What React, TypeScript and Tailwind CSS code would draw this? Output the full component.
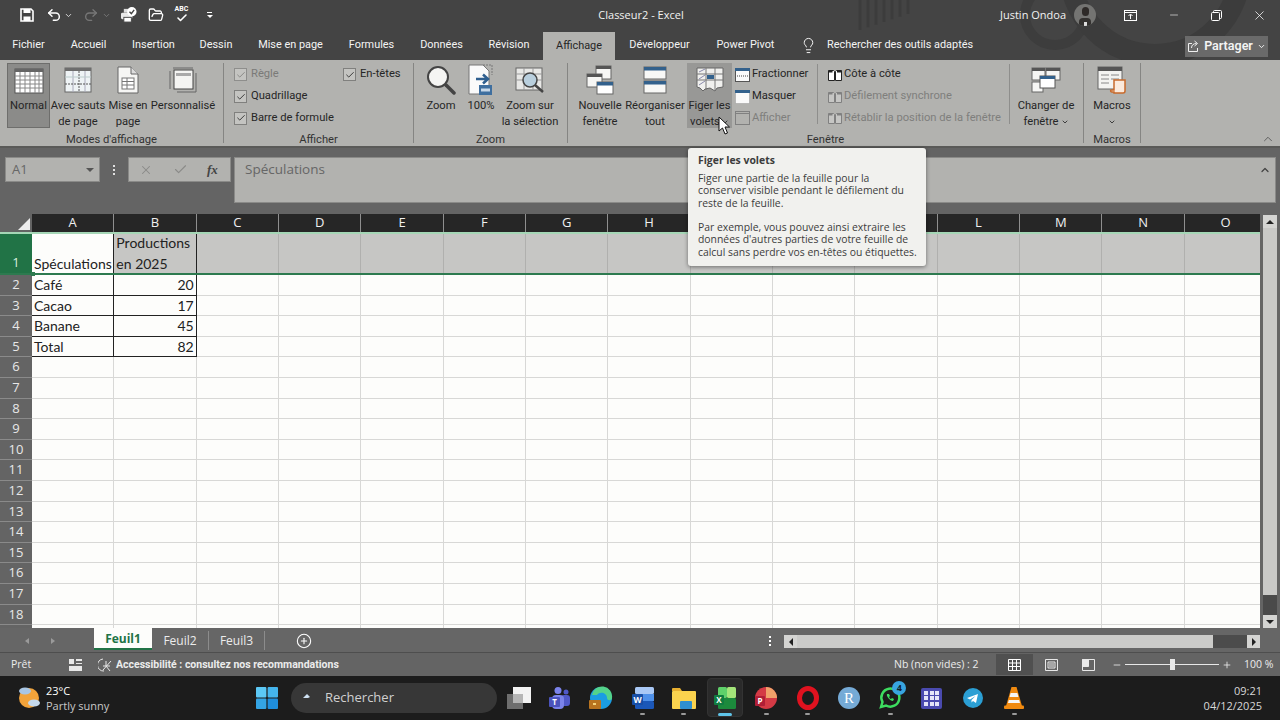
import React from "react";
import {
  Undo2,
  Redo2,
  ChevronDown,
  ChevronUp,
  Check,
  FolderOpen,
  Lightbulb,
  Minus,
  X,
  Plus,
  CirclePlus,
} from "lucide-react";

const UI = "font-['Open_Sans','Noto_Sans',sans-serif]";
const NARROW = "font-['Roboto','Open_Sans',sans-serif]";
const COLS = ["A", "B", "C", "D", "E", "F", "G", "H", "I", "J", "K", "L", "M", "N", "O"];
const ROWS = [2, 3, 4, 5, 6, 7, 8, 9, 10, 11, 12, 13, 14, 15, 16, 17, 18, 19];
const DATA: Record<number, [string, string]> = {
  2: ["Café", "20"],
  3: ["Cacao", "17"],
  4: ["Banane", "45"],
  5: ["Total", "82"],
};
const LEFT_TABS = [
  ["Fichier", "w-[57px]"],
  ["Accueil", "w-[63px]"],
  ["Insertion", "w-[67px]"],
  ["Dessin", "w-[58px]"],
  ["Mise en page", "w-[91px]"],
  ["Formules", "w-[71px]"],
  ["Données", "w-[69px]"],
  ["Révision", "w-[66px]"],
];
const RIGHT_TABS = [
  ["Développeur", "w-[89px]"],
  ["Power Pivot", "w-[83px]"],
];

/* ---------- ribbon icons ---------- */

function GridIcon() {
  return (
    <svg width="30" height="26" viewBox="0 0 30 26">
      <rect x="1" y="1" width="28" height="24" fill="#fff" stroke="#555" />
      <rect x="1" y="1" width="28" height="3" fill="#666" />
      {[8, 12, 16, 20].map((y) => (
        <line key={y} x1="1" x2="29" y1={y} y2={y} stroke="#888" />
      ))}
      {[6, 11, 16, 21, 25].map((x) => (
        <line key={x} x1={x} x2={x} y1="4" y2="25" stroke="#888" />
      ))}
    </svg>
  );
}

function PageBreakIcon() {
  return (
    <svg width="28" height="26" viewBox="0 0 28 26">
      <rect x="1" y="1" width="26" height="24" fill="#eef3f5" stroke="#666" />
      <rect x="1" y="1" width="26" height="3" fill="#6d6d6d" />
      <line x1="9" x2="9" y1="4" y2="25" stroke="#aab" />
      <line x1="15" x2="15" y1="4" y2="25" stroke="#555" strokeDasharray="2 1" />
      <line x1="21" x2="21" y1="4" y2="25" stroke="#aab" />
      <line x1="1" x2="27" y1="10" y2="10" stroke="#bcc" />
      <line x1="1" x2="27" y1="17" y2="17" stroke="#555" strokeDasharray="2 1" />
    </svg>
  );
}

function PageIcon() {
  return (
    <svg width="22" height="28" viewBox="0 0 22 28">
      <path d="M1 1h13l7 7v19H1z" fill="#f6f6f4" stroke="#666" />
      <path d="M14 1v7h7" fill="#ddd" stroke="#666" />
      <rect x="5" y="12" width="12" height="11" fill="#fff" stroke="#777" />
      <path d="M5 15.5h12M5 19h12M10 12v11" stroke="#777" />
    </svg>
  );
}

function CustomViewIcon() {
  return (
    <svg width="28" height="26" viewBox="0 0 28 26">
      <path d="M1 4v18M4 1h20M27 6v19H8" fill="none" stroke="#666" strokeWidth="1" />
      <rect x="5" y="3" width="19" height="19" fill="#f4f4f2" stroke="#444" />
      <rect x="7" y="6" width="15" height="3" fill="#a9a9a9" />
    </svg>
  );
}

function Magnifier() {
  return (
    <svg width="30" height="30" viewBox="0 0 30 30">
      <circle cx="12" cy="12" r="10" fill="#f5f5f3" stroke="#444" strokeWidth="2" />
      <line x1="20" y1="20" x2="28" y2="28" stroke="#444" strokeWidth="3.5" strokeLinecap="round" />
    </svg>
  );
}

function HundredIcon() {
  return (
    <svg width="26" height="32" viewBox="0 0 26 32">
      <path d="M1 1h14l6 6v23H1z" fill="#fafafa" stroke="#777" />
      <path d="M15 1h9v10" fill="none" stroke="#777" strokeDasharray="2 1" />
      <path d="M8 15h11M15 10.5l5 4.5-5 4.5" fill="none" stroke="#2f5f8f" strokeWidth="2.5" />
      <rect x="11" y="21" width="13" height="10" fill="#3f6f9f" />
      <rect x="13" y="24.5" width="9" height="3" fill="#c8d8e8" />
    </svg>
  );
}

function ZoomSelectionIcon() {
  return (
    <svg width="30" height="30" viewBox="0 0 30 30">
      <rect x="1" y="3" width="26" height="22" fill="#e8e8e6" stroke="#666" />
      <path d="M1 9h26M1 15h26M9 3v22M18 3v22" stroke="#999" />
      <circle cx="15" cy="15" r="7" fill="#b9cfdd" stroke="#444" strokeWidth="1.5" />
      <line x1="20" y1="20" x2="28" y2="27" stroke="#444" strokeWidth="2.5" />
    </svg>
  );
}

function NewWindowIcon() {
  return (
    <svg width="28" height="30" viewBox="0 0 28 30">
      <rect x="10" y="1" width="15" height="13" fill="#f6f6f4" stroke="#666" />
      <rect x="10" y="1" width="15" height="3" fill="#555" />
      <rect x="1" y="9" width="15" height="13" fill="#f6f6f4" stroke="#666" />
      <rect x="1" y="9" width="15" height="3" fill="#555" />
      <rect x="11" y="17" width="16" height="12" fill="#fff" stroke="#666" />
      <rect x="11" y="17" width="16" height="3.5" fill="#33618c" />
    </svg>
  );
}

function ArrangeIcon() {
  return (
    <svg width="24" height="28" viewBox="0 0 24 28">
      <rect x="1" y="1" width="22" height="12" fill="#f8f8f6" stroke="#666" />
      <rect x="1" y="1" width="22" height="3.5" fill="#33618c" />
      <rect x="1" y="15" width="22" height="12" fill="#f8f8f6" stroke="#666" />
      <rect x="1" y="15" width="22" height="3.5" fill="#33618c" />
    </svg>
  );
}

function FreezeIcon() {
  return (
    <svg width="28" height="26" viewBox="0 0 28 26">
      <path d="M1 1h26v19l-6 1-2 3-5-3-5 1-2 2-3-3-3-1z" fill="#f0f0ee" stroke="#666" />
      <path d="M1 7h26M1 13h26M10 1v22M19 1v22" stroke="#777" />
      <path d="M3 5l6-3M3 12l6-4M3 18l6-4" stroke="#88a" />
      <rect x="11" y="8" width="7" height="4" fill="#33618c" />
    </svg>
  );
}

function SmallWindow({ kind }: { kind: "split" | "hide" | "show" }) {
  if (kind === "show") {
    return (
      <svg width="15" height="14" viewBox="0 0 15 14">
        <rect x="0.5" y="0.5" width="14" height="13" fill="none" stroke="#808080" />
        <line x1="0.5" x2="14.5" y1="2.5" y2="2.5" stroke="#808080" />
      </svg>
    );
  }
  return (
    <svg width="15" height="14" viewBox="0 0 15 14">
      <rect
        x="0.5"
        y="0.5"
        width="14"
        height="13"
        fill="#fafafa"
        stroke={kind === "split" ? "#555" : "#999"}
        strokeDasharray={kind === "hide" ? "1 1" : undefined}
      />
      <rect x="0" y="0" width="15" height="3" fill="#33618c" />
      {kind === "split" && <line x1="2" x2="13" y1="8" y2="8" stroke="#444" strokeDasharray="1 1" />}
    </svg>
  );
}

function SideBySide({ dim }: { dim?: boolean }) {
  const c = dim ? "#808080" : "#222";
  return (
    <svg width="14" height="12" viewBox="0 0 14 12">
      <path d="M0.5 1.5h5l1 1v9h-6zM7.5 2.5l1-1h5v10h-6z" fill={dim ? "#c6c6c4" : "#fff"} stroke={c} />
      <path d="M0.5 1.5h4v2h-4zM9 1.5h4.5v2H9z" fill={c} />
    </svg>
  );
}

function SwitchWindowIcon() {
  return (
    <svg width="30" height="26" viewBox="0 0 30 26">
      <rect x="1" y="1" width="13" height="12" fill="#f6f6f4" stroke="#666" />
      <rect x="1" y="1" width="13" height="3" fill="#555" />
      <rect x="15" y="1" width="14" height="12" fill="#f6f6f4" stroke="#666" />
      <rect x="15" y="1" width="14" height="3" fill="#555" />
      <rect x="1" y="15" width="11" height="10" fill="#f6f6f4" stroke="#666" />
      <rect x="9" y="9" width="15" height="12" fill="#fff" stroke="#555" />
      <rect x="9" y="9" width="15" height="3" fill="#33618c" />
    </svg>
  );
}

function MacroIcon() {
  return (
    <svg width="30" height="28" viewBox="0 0 30 28">
      <rect x="1" y="1" width="24" height="22" fill="#f3f3f1" stroke="#666" />
      <rect x="1" y="1" width="24" height="4" fill="#555" />
      <path d="M4 9h8M14 9h8M4 13h8M14 13h8M4 17h8" stroke="#888" />
      <path d="M17 14h11v11c0 1.5-1 2-2 2H17v-1h-2c-1 0-2-1-1-2h3z" fill="#fbeadd" stroke="#c86a2b" strokeWidth="1.5" />
    </svg>
  );
}

function Tick({ dim }: { dim?: boolean }) {
  return (
    <span
      className={`flex h-[13px] w-[13px] items-center justify-center border ${
        dim ? "border-[#8e8e8c] text-[#7d7d7b]" : "border-[#80807e] text-[#222]"
      } bg-[#c4c4c1]`}
    >
      <Check size={10} strokeWidth={2} />
    </span>
  );
}

/* ---------- ribbon pieces ---------- */

function RibbonBtn({
  w,
  icon,
  lines,
  state,
}: {
  w: string;
  icon: React.ReactNode;
  lines: React.ReactNode[];
  state?: "on" | "hover";
}) {
  const bg =
    state === "on"
      ? "bg-[#8b8b89] border border-[#6e6e6c]"
      : state === "hover"
      ? "bg-[#989896]"
      : "";
  return (
    <div className={`${w} ${bg} flex h-[65px] shrink-0 flex-col items-center`}>
      <div className={`${state === "on" ? "h-[35px]" : "h-[36px]"} flex w-full shrink-0 items-center justify-center pb-[2px]`}>{icon}</div>
      {lines.map((l, i) => (
        <div key={i} className="flex h-[15.5px] shrink-0 items-center whitespace-nowrap text-[11.2px] text-[#262626]">
          {l}
        </div>
      ))}
    </div>
  );
}

function CheckRow({ label, dim }: { label: string; dim?: boolean }) {
  return (
    <div className="flex h-[21.7px] items-center gap-[4px]">
      <Tick dim={dim} />
      <span className={`whitespace-nowrap text-[11.2px] ${dim ? "text-[#7a7a78]" : "text-[#262626]"}`}>{label}</span>
    </div>
  );
}

function SmallRow({ icon, label, dim }: { icon: React.ReactNode; label: string; dim?: boolean }) {
  return (
    <div className="flex h-[21.7px] items-center gap-[2px]">
      <span className="flex w-[15px] items-center justify-center">{icon}</span>
      <span className={`whitespace-nowrap text-[11.2px] ${dim ? "text-[#7f7f7d]" : "text-[#262626]"}`}>{label}</span>
    </div>
  );
}

function Group({ w, label, children }: { w: string; label: string; children: React.ReactNode }) {
  return (
    <div className={`${w} flex h-[80px] shrink-0 flex-col border-r border-[#858583]`}>
      <div className="flex h-[65px] shrink-0 items-start">{children}</div>
      <div className="mt-[5px] shrink-0 text-center text-[11.2px] leading-[14px] text-[#333]">{label}</div>
    </div>
  );
}

/* ---------- taskbar icons ---------- */

function TaskIcon({ children, dot, active }: { children: React.ReactNode; dot?: boolean; active?: boolean }) {
  return (
    <div className="relative flex h-[44px] w-[41.3px] items-center justify-center">
      {active && <div className="absolute inset-x-[3px] top-[2px] bottom-[3px] rounded-[4px] border border-[#333] bg-[#2a2a2a]" />}
      <div className="relative flex items-center justify-center">{children}</div>
      {dot && <div className="absolute bottom-[5px] left-[18px] h-[2px] w-[5px] rounded bg-[#9a9a9a]" />}
      {active && <div className="absolute bottom-[4px] left-[14px] h-[3px] w-[14px] rounded bg-[#5fc3e8]" />}
    </div>
  );
}

export default function App() {
  return (
    <div className={`${NARROW} relative flex h-[720px] w-[1280px] flex-col overflow-hidden bg-[#646464]`}>
      {/* title bar + tabs share the dark backdrop */}
      <div className="relative h-[60px] shrink-0 bg-[#444444]">
        <svg className="absolute left-[850px] top-0" width="430" height="60" viewBox="0 0 430 60" fill="none">
          {[0, 8, 16, 24, 32, 40, 48].map((x) => (
            <line key={x} x1={x + 10} x2={x + 10} y1="0" y2={30 - x / 3} stroke="#3c3c3c" strokeWidth="3" />
          ))}
          <circle cx="205" cy="15" r="30" stroke="#3d3d3d" strokeWidth="10" />
          <circle cx="305" cy="-30" r="85" stroke="#3c3c3c" strokeWidth="22" />
        </svg>

        {/* quick access + title */}
        <div className="relative flex h-[30px] items-center text-white">
          <div className="ml-[20px] flex h-[30px] w-[14px] items-center">
            <svg width="14" height="14" viewBox="0 0 14 14">
              <path d="M1 1h10l2 2v10H1z" fill="none" stroke="#fff" strokeWidth="1.6" />
              <rect x="3.5" y="1" width="7" height="4" fill="#fff" />
              <rect x="3.5" y="8.5" width="7" height="4.5" fill="#fff" />
            </svg>
          </div>
          <Undo2 size={16} strokeWidth={2.2} className="ml-[12px]" />
          <ChevronDown size={9} strokeWidth={2.5} className="ml-[2px] text-[#ddd]" />
          <Redo2 size={16} strokeWidth={2} className="ml-[10px] text-[#777]" />
          <ChevronDown size={9} strokeWidth={2.5} className="ml-[3px] text-[#777]" />
          <svg className="ml-[10px]" width="16" height="16" viewBox="0 0 17 17">
            <rect x="0" y="6" width="12" height="7" rx="1.5" fill="#e8e8e8" />
            <rect x="3" y="11" width="8" height="5" fill="#fff" stroke="#444" />
            <rect x="3" y="2" width="6" height="4" fill="#ddd" />
            <circle cx="11.5" cy="5" r="5" fill="#fff" />
            <path d="M9 5l2 2 3-4" fill="none" stroke="#444" strokeWidth="1.5" />
          </svg>
          <FolderOpen size={16} strokeWidth={2} className="ml-[11px]" />
          <div className="ml-[10px] flex w-[15px] flex-col items-center">
            <span className="text-[7px] font-bold leading-[7px]">ABC</span>
            <Check size={12} strokeWidth={3.2} className="-mt-[1px]" />
          </div>
          <div className="ml-[17px] flex w-[7px] flex-col items-center gap-[2px]">
            <div className="h-px w-[5px] bg-white" />
            <div className="h-0 w-0 border-x-[3px] border-t-[3px] border-x-transparent border-t-white" />
          </div>

          <div className={`${UI} ml-[384px] w-[88px] whitespace-nowrap text-center text-[11px] text-[#f2f2f2]`}>Classeur2 - Excel</div>

          <div className={`${UI} ml-[315px] w-[68px] whitespace-nowrap text-[11px] text-[#f2f2f2]`}>Justin Ondoa</div>
          <div className="relative ml-[6px] flex h-[22px] w-[22px] justify-center overflow-hidden rounded-full bg-[#747472]">
            <div className="mt-[3px] h-[9px] w-[7px] rounded-full bg-[#2e2a28]" />
            <div className="absolute bottom-0 h-[8px] w-[12px] rounded-t bg-[#33312f]" />
            <div className="absolute bottom-0 h-[4px] w-[3px] bg-[#ddd]" />
          </div>
          <svg className="ml-[28px]" width="13" height="11" viewBox="0 0 13 11" fill="none" stroke="#fff">
            <rect x="0.5" y="0.5" width="12" height="10" />
            <path d="M0.5 2.5h12M6.5 9V4.5M4.5 6l2-2 2 2" />
          </svg>
          <Minus size={12} strokeWidth={1.2} className="ml-[31px]" />
          <svg className="ml-[31px]" width="11" height="11" viewBox="0 0 11 11" fill="none" stroke="#fff">
            <rect x="0.5" y="2.5" width="8" height="8" rx="1" />
            <path d="M2.5 2.5v-1a1 1 0 0 1 1-1h6a1 1 0 0 1 1 1v6a1 1 0 0 1-1 1h-1" />
          </svg>
          <X size={15} strokeWidth={1.2} className="ml-[30px]" />
        </div>

        {/* tabs */}
        <div className="relative flex h-[30px] items-end text-[10.9px] text-[#f4f4f4]">
          {LEFT_TABS.map(([t, w]) => (
            <div key={t} className={`${w} flex h-[30px] items-center justify-center whitespace-nowrap`}>
              {t}
            </div>
          ))}
          <div className="ml-[1px] flex h-[28px] w-[72px] items-center justify-center bg-[#b2b2af] text-[#262626]">Affichage</div>
          {RIGHT_TABS.map(([t, w]) => (
            <div key={t} className={`${w} flex h-[30px] items-center justify-center whitespace-nowrap`}>
              {t}
            </div>
          ))}
          <div className="flex h-[30px] items-center pl-[13px]">
            <Lightbulb size={17} strokeWidth={1.4} />
            <span className="ml-[10px] whitespace-nowrap">Rechercher des outils adaptés</span>
          </div>
          <div className="ml-auto mr-[12px] flex h-[21px] w-[83px] -translate-y-[3px] items-center justify-center gap-[4px] bg-[#6a6a6a] text-[12.5px] font-semibold">
            <svg width="13" height="13" viewBox="0 0 13 13" fill="none" stroke="#f0f0f0">
              <path d="M5 3.5H1.5v8h9V8M4.5 8c0-3 2-4.5 5-4.5M7.5 1l3 2.5-3 2.5" />
            </svg>
            <span>Partager</span>
            <ChevronDown size={9} strokeWidth={2.5} />
          </div>
        </div>
      </div>

      {/* ribbon */}
      <div className="flex h-[88px] shrink-0 border-b-2 border-[#5a5a58] bg-[#b2b2af] pt-[3px]">
        <Group w="w-[224px]" label="Modes d'affichage">
          <div className="ml-[7px]" />
          <RibbonBtn w="w-[43px]" state="on" icon={<GridIcon />} lines={["Normal"]} />
          <RibbonBtn w="w-[56px]" icon={<PageBreakIcon />} lines={["Avec sauts", "de page"]} />
          <RibbonBtn w="w-[44px]" icon={<PageIcon />} lines={["Mise en", "page"]} />
          <RibbonBtn w="w-[66px]" icon={<CustomViewIcon />} lines={["Personnalisé"]} />
        </Group>

        <Group w="w-[190px]" label="Afficher">
          <div className="mt-[1px] ml-[10px] w-[109px]">
            <CheckRow label="Règle" dim />
            <CheckRow label="Quadrillage" />
            <CheckRow label="Barre de formule" />
          </div>
          <div className="mt-[1px]">
            <CheckRow label="En-têtes" />
          </div>
        </Group>

        <Group w="w-[154px]" label="Zoom">
          <RibbonBtn w="w-[54px]" icon={<Magnifier />} lines={["Zoom"]} />
          <RibbonBtn w="w-[26px]" icon={<HundredIcon />} lines={["100%"]} />
          <RibbonBtn w="w-[72px]" icon={<ZoomSelectionIcon />} lines={["Zoom sur", "la sélection"]} />
        </Group>

        <Group w="w-[516px]" label="Fenêtre">
          <div className="ml-[5px]" />
          <RibbonBtn w="w-[54px]" icon={<NewWindowIcon />} lines={["Nouvelle", "fenêtre"]} />
          <RibbonBtn w="w-[56px]" icon={<ArrangeIcon />} lines={["Réorganiser", "tout"]} />
          <div className="ml-[4px]" />
          <RibbonBtn
            w="w-[45px]"
            state="hover"
            icon={<FreezeIcon />}
            lines={[
              "Figer les",
              <span className="flex items-center gap-[1px]">
                volets <ChevronDown size={8} strokeWidth={2.5} />
              </span>,
            ]}
          />
          <div className="mt-[1px] ml-[3px] w-[82px]">
            <SmallRow icon={<SmallWindow kind="split" />} label="Fractionner" />
            <SmallRow icon={<SmallWindow kind="hide" />} label="Masquer" />
            <SmallRow icon={<SmallWindow kind="show" />} label="Afficher" dim />
          </div>
          <div className="mt-[1px] h-[60px] w-[193px] border-x border-[#8e8e8c] pl-[9px]">
            <SmallRow icon={<SideBySide />} label="Côte à côte" />
            <SmallRow icon={<SideBySide dim />} label="Défilement synchrone" dim />
            <SmallRow icon={<SideBySide dim />} label="Rétablir la position de la fenêtre" dim />
          </div>
          <RibbonBtn
            w="w-[72px]"
            icon={<SwitchWindowIcon />}
            lines={[
              "Changer de",
              <span className="flex items-center gap-[2px]">
                fenêtre <ChevronDown size={8} strokeWidth={2.5} />
              </span>,
            ]}
          />
        </Group>

        <Group w="w-[57px]" label="Macros">
          <RibbonBtn w="w-[56px]" icon={<MacroIcon />} lines={["Macros", <ChevronDown size={8} strokeWidth={2.5} />]} />
        </Group>

        <div className="flex h-[83px] flex-1 items-end justify-end pr-[5px] text-[#555]">
          <ChevronUp size={14} strokeWidth={1.5} />
        </div>
      </div>

      {/* formula bar */}
      <div className={`${UI} flex h-[66px] shrink-0 items-start pl-[5px] pr-[4px] pt-[9px]`}>
        <div className="flex h-[25px] w-[95px] items-center justify-between border border-[#8a8a88] bg-[#b2b2af] pl-[6px] pr-[5px] text-[13px] text-[#666]">
          A1
          <div className="h-0 w-0 border-x-[4px] border-t-[4px] border-x-transparent border-t-[#555]" />
        </div>
        <div className="flex h-[25px] w-[28px] flex-col items-center justify-center gap-[2px]">
          {[0, 1, 2].map((i) => (
            <div key={i} className="h-[2px] w-[2px] bg-[#e0e0e0]" />
          ))}
        </div>
        <div className="flex h-[25px] w-[103px] items-center border border-[#8a8a88] bg-[#b2b2af] text-[#8a8a88]">
          <X size={14} strokeWidth={1.8} className="ml-[10px]" />
          <Check size={15} strokeWidth={1.8} className="ml-[20px]" />
          <span className="ml-[19px] font-['Liberation_Serif',serif] text-[13px] font-bold italic text-[#444]">fx</span>
        </div>
        <div className="ml-[3px] flex h-[46px] flex-1 items-start justify-between border border-[#8a8a88] bg-[#b2b2af] pl-[10px] pr-[4px] pt-[1px] text-[13.5px] text-[#666]">
          Spéculations
          <ChevronUp size={12} strokeWidth={2.5} className="mt-[5px] text-[#444]" />
        </div>
      </div>

      {/* sheet + vertical scrollbar */}
      <div className="flex h-[414px] shrink-0">
        <div className="h-full w-[1260px] shrink-0 overflow-hidden font-['Lato','Open_Sans',sans-serif] text-[14px] text-[#222]">
          {/* column headers */}
          <div className="flex h-[18px]">
            <div className="flex h-full w-[32px] shrink-0 items-end justify-end bg-[#646464] pb-[2px] pr-[2px]">
              <div className="h-0 w-0 border-b-[12px] border-l-[12px] border-b-[#ededed] border-l-transparent" />
            </div>
            {COLS.map((c) => (
              <div
                key={c}
                className={`${UI} flex h-full w-[82.35px] shrink-0 items-center justify-center border-r border-[#8f8f8f] bg-[#262626] text-[13px] text-[#f0f0f0]`}
              >
                {c}
              </div>
            ))}
          </div>

          {/* frozen row 1 */}
          <div className="relative flex h-[43px] border-y-2 border-b-[#2d7a4f] border-t-[#a5d6b6]">
            <div className="flex w-[32px] shrink-0 items-end justify-center bg-[#217346] pb-[1px] text-[13px] text-[#d8efdf]">
              <span className={UI}>1</span>
            </div>
            {COLS.map((c, i) => (
              <div
                key={c}
                className={`flex w-[82.35px] shrink-0 flex-col justify-end whitespace-nowrap border-r pl-[2px] leading-[20.5px] ${
                  i < 2 ? "border-[#222]" : "border-[#b0b0ae]"
                } ${i === 0 ? "bg-[#fdfdfb]" : "bg-[#c6c6c4]"}`}
              >
                {i === 0 && <span className="translate-y-px">Spéculations</span>}
                {i === 1 && (
                  <>
                    <span className="translate-y-px">Productions</span>
                    <span className="translate-y-px">en 2025</span>
                  </>
                )}
              </div>
            ))}
            <div className="absolute -bottom-[3px] left-[31px] h-[4px] w-[4px] bg-[#2d7a4f]" />
          </div>

          {/* rows */}
          {ROWS.map((r) => {
            const d = DATA[r];
            return (
              <div key={r} className="flex h-[20.6px]">
                <div className={`${UI} flex w-[32px] shrink-0 items-center justify-center border-b border-[#8a8a8a] bg-[#646464] text-[13px] text-[#e8e8e8]`}>
                  {r < 19 ? r : ""}
                </div>
                {COLS.map((c, i) => (
                  <div
                    key={c}
                    className={`flex w-[82.35px] shrink-0 items-center whitespace-nowrap border-b border-r bg-[#fdfdfb] px-[2px] ${
                      d && i < 2 ? "border-[#222]" : "border-[#d8d8d6]"
                    } ${i === 1 ? "justify-end" : ""}`}
                  >
                    {d && i < 2 ? d[i] : ""}
                  </div>
                ))}
              </div>
            );
          })}
        </div>

        <div className="flex w-[20px] flex-col items-center pt-[1px]">
          <div className="flex h-[13px] w-[14px] items-center justify-center bg-[#d4d4d2]">
            <div className="h-0 w-0 border-x-[4px] border-b-[4px] border-x-transparent border-b-[#222]" />
          </div>
          <div className="h-[367px] w-[14px] bg-[#c8c8c6]" />
          <div className="h-[20px] w-[14px] bg-[#4a4a4a]" />
          <div className="flex h-[13px] w-[14px] items-center justify-center bg-[#d4d4d2]">
            <div className="h-0 w-0 border-x-[4px] border-t-[4px] border-x-transparent border-t-[#222]" />
          </div>
        </div>
      </div>

      {/* sheet tabs + horizontal scrollbar */}
      <div className={`${UI} flex h-[25px] shrink-0 items-start border-b border-[#4e4e4e] bg-[#666666] text-[12px] text-[#ececec]`}>
        <div className="ml-[25px] mt-[10px] h-0 w-0 border-y-[3px] border-r-[4px] border-y-transparent border-r-[#9a9a9a]" />
        <div className="ml-[22px] mt-[10px] h-0 w-0 border-y-[3px] border-l-[4px] border-y-transparent border-l-[#9a9a9a]" />
        <div className="ml-[39px] flex h-[22px] w-[58px] items-center justify-center border-b-2 border-[#217346] bg-[#fdfdfb] pt-[2px] font-bold text-[#217346]">
          Feuil1
        </div>
        <div className="mt-[3px] flex h-[19px] w-[57px] items-center justify-center border-r border-[#8c8c8c]">Feuil2</div>
        <div className="mt-[3px] flex h-[19px] w-[56px] items-center justify-center border-r border-[#8c8c8c]">Feuil3</div>
        <CirclePlus size={16} strokeWidth={1.6} className="ml-[31px] mt-[5px] text-white" />
        <div className="ml-[457px] mt-[8px] flex h-[10px] flex-col justify-between">
          {[0, 1, 2].map((i) => (
            <div key={i} className="h-[2px] w-[2px] bg-white" />
          ))}
        </div>
        <div className="ml-[13px] mt-[7px] flex h-[13px] w-[476px]">
          <div className="flex w-[13px] items-center justify-center bg-[#d4d4d2]">
            <div className="h-0 w-0 border-y-[4px] border-r-[4px] border-y-transparent border-r-[#222]" />
          </div>
          <div className="w-[416px] bg-[#cbcbc9]" />
          <div className="w-[34px] bg-[#4c4c4c]" />
          <div className="flex w-[13px] items-center justify-center bg-[#d4d4d2]">
            <div className="h-0 w-0 border-y-[4px] border-l-[4px] border-y-transparent border-l-[#222]" />
          </div>
        </div>
      </div>

      {/* status bar */}
      <div className={`${UI} flex h-[23px] shrink-0 items-center bg-[#646464] text-[10.5px] text-[#ececec]`}>
        <span className="ml-[11px] w-[58px]">Prêt</span>
        <svg width="13" height="12" viewBox="0 0 13 12" fill="#e8e8e8">
          <rect x="0" y="0" width="5" height="5" />
          <rect x="7" y="0" width="6" height="2" />
          <rect x="7" y="4" width="6" height="1" />
          <rect x="0" y="7" width="13" height="5" />
        </svg>
        <svg className="ml-[16px]" width="15" height="14" viewBox="0 0 15 14" fill="none" stroke="#e8e8e8">
          <path d="M5 1a6 6 0 0 0 1 12M8 3v5l4 5M5 8h7M13 3l-8 9" />
        </svg>
        <span className={`${NARROW} ml-[3px] w-[267px] whitespace-nowrap font-bold`}>Accessibilité : consultez nos recommandations</span>
        <span className="ml-[511px] w-[102px] whitespace-nowrap">Nb (non vides) : 2</span>
        <div className="flex h-[21px] w-[37px] items-center justify-center bg-[#505050]">
          <svg width="13" height="12" viewBox="0 0 13 12" fill="none" stroke="#fff">
            <path d="M0.5 0.5h12v11h-12zM0.5 4h12M0.5 7.5h12M4.5 0.5v11M8.5 0.5v11" />
          </svg>
        </div>
        <svg className="ml-[12px]" width="13" height="12" viewBox="0 0 13 12" fill="none" stroke="#e8e8e8">
          <path d="M0.5 0.5h12v11h-12zM3 3h7v6H3zM4 5h5M4 7h5" />
        </svg>
        <svg className="ml-[24px]" width="13" height="12" viewBox="0 0 13 12" fill="none" stroke="#e8e8e8">
          <path d="M0.5 0.5h12v11h-12z" />
          <path d="M0.5 0.5h6v7h-6z" fill="#e8e8e8" />
        </svg>
        <Minus size={10} className="ml-[17px]" />
        <div className="relative ml-[3px] flex h-[12px] w-[94px] items-center justify-center">
          <div className="h-px w-full bg-[#e8e8e8]" />
          <div className="absolute h-[11px] w-[5px] bg-[#e8e8e8]" />
        </div>
        <Plus size={10} className="ml-[3px]" />
        <span className="ml-[12px] whitespace-nowrap">100 %</span>
      </div>

      {/* taskbar */}
      <div className={`${UI} flex flex-1 items-center bg-[#1c1c1c] text-white`}>
        <svg className="ml-[17px]" width="24" height="24" viewBox="0 0 24 24">
          <circle cx="12" cy="12" r="10" fill="#f2a33a" />
          <ellipse cx="8" cy="5" rx="6" ry="3.5" fill="#a9c6e4" />
          <ellipse cx="17" cy="17" rx="6" ry="3.5" fill="#c4d8ec" />
        </svg>
        <div className="ml-[5px] flex w-[210px] flex-col text-[11px] leading-[15px]">
          <span>23°C</span>
          <span className="text-[#c8c8c8]">Partly sunny</span>
        </div>
        <svg width="22" height="22" viewBox="0 0 22 22">
          <rect x="0" y="0" width="10.4" height="10.4" rx="1" fill="#5cc8f5" />
          <rect x="11.6" y="0" width="10.4" height="10.4" rx="1" fill="#44b4ec" />
          <rect x="0" y="11.6" width="10.4" height="10.4" rx="1" fill="#34a4e4" />
          <rect x="11.6" y="11.6" width="10.4" height="10.4" rx="1" fill="#1f8edc" />
        </svg>
        <div className="ml-[13px] flex h-[30px] w-[206px] items-center rounded-full bg-[#373737] pl-[11px] text-[13px] text-[#d0d0d0]">
          <svg width="10" height="10" viewBox="0 0 10 10">
            <path d="M1 5l4-4 3 3-2 1z" fill="#cfe2f3" />
          </svg>
          <span className="-mt-px ml-[13px]">Rechercher</span>
        </div>
        <div className="ml-[1px] flex h-[44px] items-center">
          <TaskIcon>
            <svg width="24" height="22" viewBox="0 0 24 22">
              <rect x="0" y="7" width="16" height="15" fill="#6e6e6e" />
              <rect x="6" y="0" width="18" height="16" fill="#f2f2f2" />
              <rect x="6" y="7" width="10" height="9" fill="#b5b5b5" />
            </svg>
          </TaskIcon>
          <TaskIcon>
            <svg width="22" height="22" viewBox="0 0 22 22">
              <circle cx="9" cy="3.5" r="3.5" fill="#7b83eb" />
              <circle cx="17" cy="5" r="2.5" fill="#5059c9" />
              <rect x="12" y="8" width="9" height="11" rx="3" fill="#5059c9" />
              <rect x="3" y="8" width="12" height="14" rx="4" fill="#7b83eb" />
              <rect x="0" y="10" width="11" height="10" rx="1" fill="#4b53bc" />
              <text x="5.5" y="18" textAnchor="middle" fontSize="8" fontWeight="bold" fill="#fff">T</text>
            </svg>
          </TaskIcon>
          <TaskIcon>
            <svg width="24" height="24" viewBox="0 0 24 24">
              <circle cx="12" cy="12" r="11" fill="#1b9de2" />
              <path d="M3 9a10 10 0 0 1 20 3c0 3-5 3-5 0 0-5-7-7-10-3z" fill="#53d38b" />
              <rect x="0" y="14" width="12" height="9" rx="1" fill="#b8731f" />
              <rect x="4" y="17" width="3" height="2" fill="#f3d27a" />
            </svg>
          </TaskIcon>
          <TaskIcon dot>
            <svg width="22" height="22" viewBox="0 0 22 22">
              <rect x="3" y="0" width="19" height="7" rx="1.5" fill="#a9c8f5" />
              <rect x="3" y="7" width="19" height="7" fill="#4f91ea" />
              <rect x="3" y="14" width="19" height="8" rx="1.5" fill="#1b57b8" />
              <rect x="0" y="7" width="11" height="11" rx="1" fill="#174ea6" />
              <text x="5.5" y="16" textAnchor="middle" fontSize="8.5" fontWeight="bold" fill="#fff">W</text>
            </svg>
          </TaskIcon>
          <TaskIcon dot>
            <svg width="24" height="22" viewBox="0 0 24 22">
              <path d="M0 2a1 1 0 0 1 1-1h7l2 3H0z" fill="#e8b030" />
              <rect x="0" y="4" width="24" height="18" rx="1" fill="#fbd34e" />
              <rect x="8" y="14" width="12" height="8" rx="1" fill="#2f8fd0" />
            </svg>
          </TaskIcon>
          <TaskIcon active>
            <svg width="22" height="22" viewBox="0 0 22 22">
              <rect x="4" y="0" width="9" height="11" rx="1.5" fill="#5fd16a" />
              <rect x="13" y="0" width="9" height="11" rx="1.5" fill="#a4e57a" />
              <rect x="4" y="11" width="18" height="11" rx="1.5" fill="#1c8a3c" />
              <rect x="0" y="8" width="10" height="10" rx="1" fill="#107c41" />
              <text x="5" y="16" textAnchor="middle" fontSize="8" fontWeight="bold" fill="#fff">X</text>
            </svg>
          </TaskIcon>
          <TaskIcon dot>
            <svg width="22" height="22" viewBox="0 0 22 22">
              <circle cx="11" cy="11" r="11" fill="#d43a45" />
              <path d="M11 0a11 11 0 0 1 11 11H11z" fill="#f0a16a" />
              <rect x="0" y="9" width="10" height="10" rx="1" fill="#b01e36" />
              <text x="5" y="17" textAnchor="middle" fontSize="8" fontWeight="bold" fill="#fff">P</text>
            </svg>
          </TaskIcon>
          <TaskIcon dot>
            <svg width="22" height="24" viewBox="0 0 22 24">
              <ellipse cx="11" cy="12" rx="8.5" ry="9.5" fill="none" stroke="#e0121f" strokeWidth="5" />
            </svg>
          </TaskIcon>
          <TaskIcon>
            <div className="flex h-[22px] w-[22px] items-center justify-center rounded-full bg-[#75aad6] font-['Liberation_Serif',serif] text-[15px] text-white">R</div>
          </TaskIcon>
          <TaskIcon dot>
            <svg width="24" height="24" viewBox="0 0 24 24">
              <path d="M3 21l1.5-5A9 9 0 1 1 8 19.5z" fill="none" stroke="#3ddc5f" strokeWidth="2.5" />
              <path d="M9 8c-1 2 3 7 6 7l1-2-2-1-1 1c-1 0-2-2-2-2l1-1-1-2z" fill="#3ddc5f" />
            </svg>
            <div className="absolute -right-[4px] -top-[5px] flex h-[14px] w-[14px] items-center justify-center rounded-full bg-[#38a5e0] text-[9px] font-bold text-[#10202c]">4</div>
          </TaskIcon>
          <TaskIcon>
            <div className="grid h-[21px] w-[21px] grid-cols-3 gap-[1.5px] rounded-[2px] bg-[#4a4aaf] p-[3px]">
              {[0, 1, 2, 3, 4, 5, 6, 7, 8].map((i) => (
                <div key={i} className="bg-[#e4e4f8]" />
              ))}
            </div>
          </TaskIcon>
          <TaskIcon>
            <svg width="20" height="20" viewBox="0 0 20 20">
              <circle cx="10" cy="10" r="10" fill="#2b9fd4" />
              <path d="M4 10l11-4-2 9-3-2-1.5 1.5V12l4-4-5.5 3.5z" fill="#fff" />
            </svg>
          </TaskIcon>
          <TaskIcon dot>
            <svg width="20" height="22" viewBox="0 0 20 22">
              <path d="M7.5 0h5L18 19H2z" fill="#f08a10" />
              <path d="M6.6 6h6.8l1 4H5.6zM4.8 13h10.4l.8 3H4z" fill="#f6f6f6" />
              <rect x="0" y="18.5" width="20" height="3.5" rx="1" fill="#f08a10" />
            </svg>
          </TaskIcon>
        </div>
        <div className="ml-auto mr-[18px] flex flex-col items-end text-[11px] leading-[15px] text-[#d8d8d8]">
          <span>09:21</span>
          <span>04/12/2025</span>
        </div>
      </div>

      {/* tooltip over the sheet */}
      <div className={`${UI} absolute left-[688px] top-[148px] h-[118px] w-[238px] rounded-[3px] bg-[#f1f1ee] px-[10px] pt-[6px] text-[10.4px] leading-[12.25px] text-[#3c3c3c] shadow-[0_1px_4px_rgba(0,0,0,0.45)]`}>
        <div className="mb-[6px] font-bold leading-[12px]">Figer les volets</div>
        {[
          "Figer une partie de la feuille pour la",
          "conserver visible pendant le défilement du",
          "reste de la feuille.",
        ].map((l) => (
          <div key={l} className="whitespace-nowrap">{l}</div>
        ))}
        <div className="h-[12.25px]" />
        {[
          "Par exemple, vous pouvez ainsi extraire les",
          "données d'autres parties de votre feuille de",
          "calcul sans perdre vos en-têtes ou étiquettes.",
        ].map((l) => (
          <div key={l} className="whitespace-nowrap">{l}</div>
        ))}
      </div>

      {/* mouse pointer */}
      <svg className="absolute left-[718px] top-[116px]" width="13" height="19" viewBox="0 0 13 19">
        <path d="M1 1v14l3.5-3 2.5 6 2.5-1-2.5-6h4.5z" fill="#fff" stroke="#111" />
      </svg>
    </div>
  );
}
